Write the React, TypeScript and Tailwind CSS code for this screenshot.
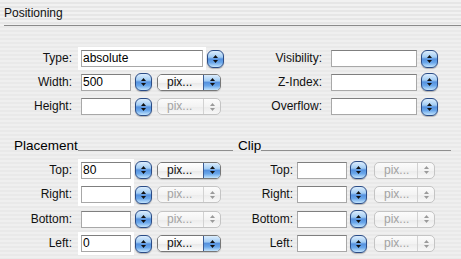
import React from 'react';

type Pop = 'on' | 'off';

function Arrows({ color = '#111' }: { color?: string }) {
  return (
    <div className="flex flex-col items-center gap-[2px]">
      <svg width="5" height="3" viewBox="0 0 5 3">
        <path d="M2.5 0L5 3H0z" fill={color} />
      </svg>
      <svg width="5" height="3" viewBox="0 0 5 3">
        <path d="M0 0H5L2.5 3z" fill={color} />
      </svg>
    </div>
  );
}

function Stepper({ className = '' }: { className?: string }) {
  return (
    <div
      className={`w-[17px] h-[18px] -mt-[0.5px] shrink-0 rounded-[6px] border border-[#2b4c86] bg-[linear-gradient(to_bottom,#dcedfd_0%,#a3cdf4_38%,#5591de_50%,#6aa7ea_72%,#c3e4fd_100%)] shadow-[0_1px_1px_rgba(0,0,0,0.25)] flex items-center justify-center ${className}`}
    >
      <Arrows />
    </div>
  );
}

function Popup({ state, w, className = '' }: { state: Pop; w: string; className?: string }) {
  if (state === 'on') {
    return (
      <div
        className={`${w} h-[17px] shrink-0 flex rounded-[5px] border border-[#777] overflow-hidden shadow-[0_1px_1px_rgba(0,0,0,0.15)] ${className}`}
      >
        <div className="flex-1 bg-[linear-gradient(to_bottom,#ffffff_0%,#f4f4f4_50%,#e9e9e9_55%,#fbfbfb_100%)] pl-[9px] text-[12px] leading-[15px] text-[#111]">
          pix...
        </div>
        <div className="w-[17px] border-l border-[#3a5c95] bg-[linear-gradient(to_bottom,#dcedfd_0%,#a3cdf4_38%,#5591de_50%,#6aa7ea_72%,#c3e4fd_100%)] flex items-center justify-center">
          <Arrows />
        </div>
      </div>
    );
  }
  return (
    <div
      className={`${w} h-[17px] shrink-0 flex rounded-[5px] border border-[#c4c4c4] overflow-hidden bg-[linear-gradient(to_bottom,#fbfbfb_0%,#f3f3f3_50%,#ececec_55%,#f8f8f8_100%)] ${className}`}
    >
      <div className="flex-1 pl-[9px] text-[12px] leading-[15px] text-[#a3a3a3]">pix...</div>
      <div className="w-[17px] border-l border-[#d2d2d2] flex items-center justify-center">
        <Arrows color="#9a9a9a" />
      </div>
    </div>
  );
}

function Field({ value = '', w, halo = '', className = '' }: { value?: string; w: string; halo?: string; className?: string }) {
  return (
    <div
      className={`${w} h-[17px] shrink-0 bg-white border border-[#a8a8a8] border-t-[#7f7f7f] pl-[1px] text-[12px] leading-[15px] text-black ${halo} ${className}`}
    >
      {value}
    </div>
  );
}

function Label({ text, w }: { text: string; w: string }) {
  return <div className={`${w} shrink-0 text-right text-[12px] leading-[17px] text-[#111]`}>{text}</div>;
}

function Heading({ text, lineW }: { text: string; lineW: string }) {
  return (
    <div className="flex items-end h-[16px]">
      <span className="text-[13.5px] leading-[16px] text-black">{text}</span>
      <div className={`${lineW} h-px bg-[#8e8e8e] mb-[3px]`} />
    </div>
  );
}

const ring = 'ring-[3px] ring-white';
const ringJoin = 'ring-[3px] ring-white shadow-[0_5px_0_3px_#fff]';

export default function App() {
  return (
    <div className="w-[461px] h-[259px] overflow-hidden font-['Liberation_Sans',Arial,sans-serif] bg-[repeating-linear-gradient(to_bottom,#efefef_0px,#efefef_2px,#e9e9e9_2px,#e9e9e9_4px)]">
      {/* header */}
      <div className="h-[26px] bg-[repeating-linear-gradient(to_bottom,#f1f1f1_0px,#f1f1f1_2px,#e6e6e6_2px,#e6e6e6_4px)] pl-[4px]">
        <div className="h-[26px] border-b border-[#8a8a8a] pt-[6px] text-[12px] leading-[14px] text-[#111]">Positioning</div>
      </div>

      {/* top block */}
      <div className="mt-[24px] flex flex-col">
        <div className="flex">
          <div className="w-[230px] flex">
            <Label text="Type:" w="w-[72px]" />
            <Field value="absolute" w="w-[122px]" halo={ring} className="ml-[9px]" />
            <Stepper className="ml-[4px]" />
          </div>
          <div className="flex">
            <Label text="Visibility:" w="w-[92px]" />
            <Field w="w-[86px]" className="ml-[9px]" />
            <Stepper className="ml-[4px]" />
          </div>
        </div>
        <div className="flex mt-[6px]">
          <div className="w-[230px] flex">
            <Label text="Width:" w="w-[72px]" />
            <Field value="500" w="w-[50px]" className="ml-[9px]" />
            <Stepper className="ml-[4px]" />
            <Popup state="on" w="w-[64px]" className="ml-[5px]" />
          </div>
          <div className="flex">
            <Label text="Z-Index:" w="w-[92px]" />
            <Field w="w-[86px]" className="ml-[9px]" />
            <Stepper className="ml-[4px]" />
          </div>
        </div>
        <div className="flex mt-[7px]">
          <div className="w-[230px] flex">
            <Label text="Height:" w="w-[72px]" />
            <Field w="w-[50px]" className="ml-[9px]" />
            <Stepper className="ml-[4px]" />
            <Popup state="off" w="w-[64px]" className="ml-[5px]" />
          </div>
          <div className="flex">
            <Label text="Overflow:" w="w-[92px]" />
            <Field w="w-[86px]" className="ml-[9px]" />
            <Stepper className="ml-[4px]" />
          </div>
        </div>
      </div>

      {/* placement / clip */}
      <div className="mt-[22px] flex">
        <div className="w-[233px] pl-[14px]">
          <Heading text="Placement" lineW="flex-1" />
        </div>
        <div className="pl-[5px]">
          <Heading text="Clip" lineW="w-[190px]" />
        </div>
      </div>

      <div className="mt-[8px] flex flex-col gap-[7px]">
        {[
          { l: 'Top:', v: '80', halo: ringJoin, pop: 'on' as Pop },
          { l: 'Right:', v: '', halo: ring, pop: 'off' as Pop },
          { l: 'Bottom:', v: '', halo: '', pop: 'off' as Pop },
          { l: 'Left:', v: '0', halo: ring, pop: 'on' as Pop },
        ].map((r) => (
          <div key={r.l} className="flex">
            <div className="w-[230px] flex">
              <Label text={r.l} w="w-[72px]" />
              <Field value={r.v} w="w-[50px]" halo={r.halo} className="ml-[9px]" />
              <Stepper className="ml-[4px]" />
              <Popup state={r.pop} w="w-[64px]" className="ml-[5px]" />
            </div>
            <div className="flex">
              <Label text={r.l} w="w-[63px]" />
              <Field w="w-[50px]" className="ml-[4px]" />
              <Stepper className="ml-[3px]" />
              <Popup state="off" w="w-[61px]" className="ml-[7px]" />
            </div>
          </div>
        ))}
      </div>
    </div>
  );
}
